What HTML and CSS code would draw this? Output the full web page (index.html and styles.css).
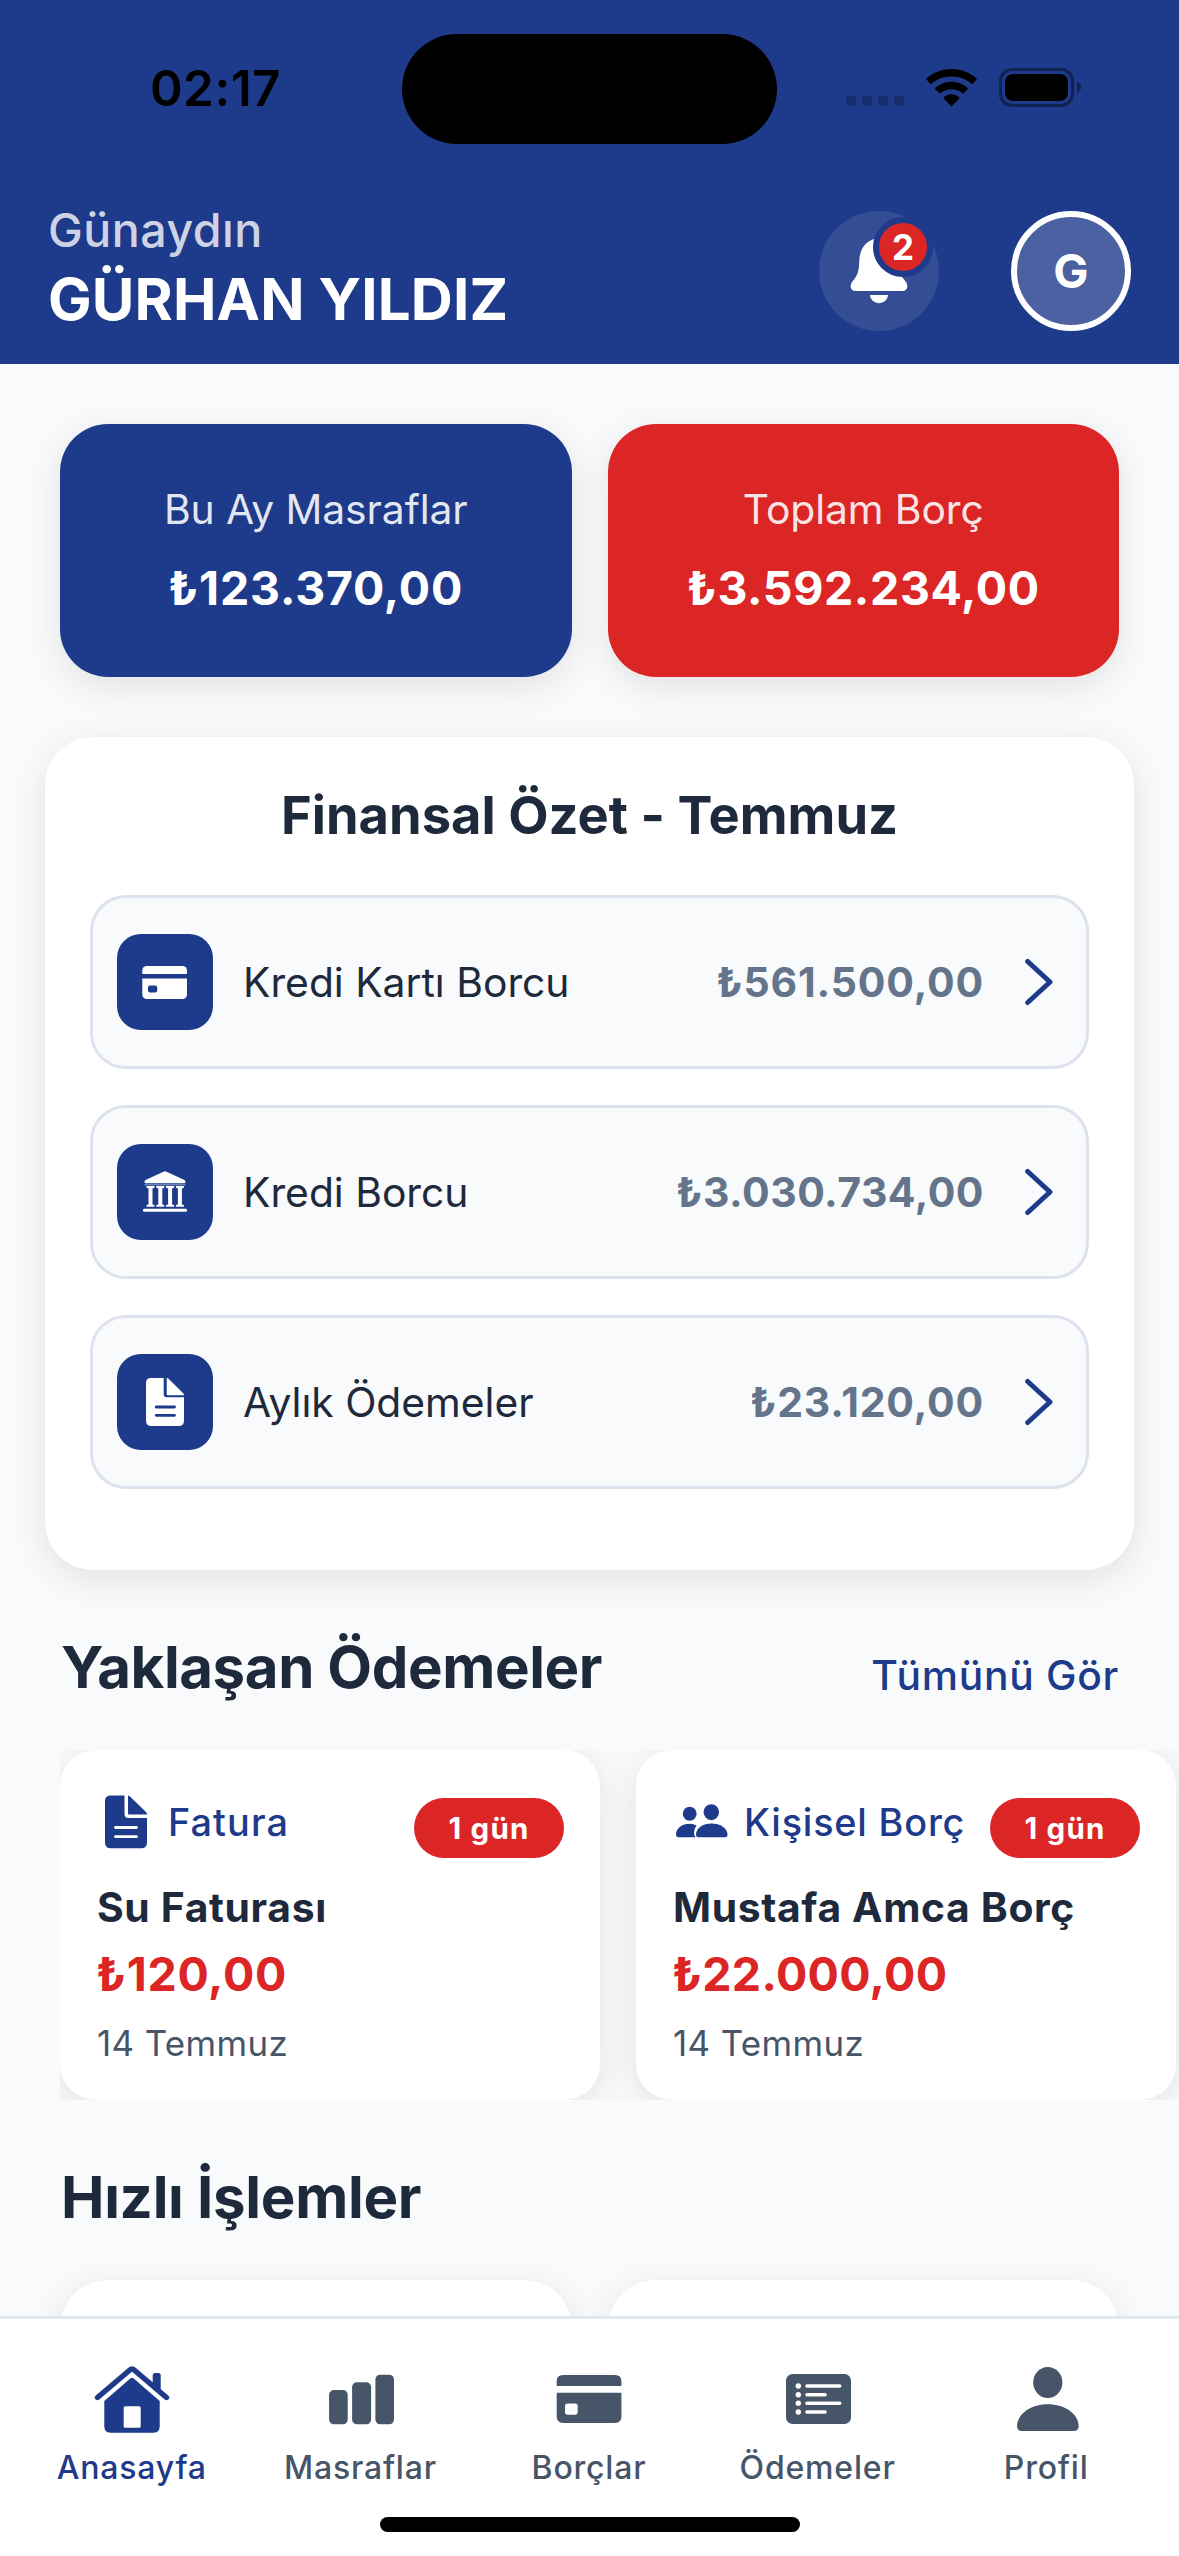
FILE: index.html
```html
<!DOCTYPE html>
<html lang="tr">
<head>
<meta charset="utf-8">
<title>Anasayfa</title>
<link rel="stylesheet" href="styles.css">
</head>
<body>
<header class="header">
  <div class="status">
    <span class="time">02:17</span>
    <span class="island"></span>
    <div class="status-icons">
      <svg class="signal" width="58" height="39" viewBox="0 0 58 39"><rect x="0" y="28" width="10" height="10" rx="3"/><rect x="16" y="28" width="10" height="10" rx="3"/><rect x="32" y="28" width="10" height="10" rx="3"/><rect x="48" y="28" width="10" height="10" rx="3"/></svg>
      <svg width="51" height="39" viewBox="0 0 51 39"><path d="M25.500 1C35.500 1 44.500 4.700 51 11L46.200 16.200C40.800 11.200 33.500 8.500 25.500 8.500S10.200 11.200 4.800 16.200L0 11C6.500 4.700 15.500 1 25.500 1Z"/><path d="M25.500 13.800C32 13.800 37.700 16.300 42.200 20.500L37.200 25.700C34 22.800 30 21.200 25.500 21.200S17 22.800 13.800 25.700L8.800 20.500C13.300 16.300 19 13.800 25.500 13.800Z"/><path d="M25.500 26.300C28.600 26.300 31.200 27.500 33.300 29.700C33.500 30 33.500 30.200 33.300 30.500L26 38Q25.500 38.500 25 38L17.700 30.500C17.500 30.200 17.500 30 17.700 29.700C19.800 27.500 22.400 26.300 25.500 26.300Z"/></svg>
      <svg width="82" height="39" viewBox="0 0 82 39"><g opacity=".4"><rect x="1.500" y="1.500" width="72" height="36" rx="11.500" fill="none" stroke="#000" stroke-width="3"/><path d="M78 13.700C80.500 14.500 82 16.700 82 19.200S80.500 24 78 24.800Z"/></g><rect x="6" y="6" width="63" height="27" rx="8"/></svg>
    </div>
  </div>
  <div class="greeting-row">
    <div class="greeting">
      <div class="hello">Günaydın</div>
      <div class="user">GÜRHAN YILDIZ</div>
    </div>
    <div class="bell">
      <svg width="120" height="120" viewBox="0 0 120 120" fill="#fff"><path d="M60 27C49 28 41 36 40.300 49C40 60 39 64 33.800 70C30 74.500 31.500 80 37 80H83C88.500 80 90 74.500 86.200 70C81 64 80 60 79.700 49C79 36 71 28 60 27Z"/><path d="M51 84H69A9 8.200 0 0 1 51 84Z"/></svg>
      <span class="count">2</span>
    </div>
    <div class="avatar">G</div>
  </div>
</header>

<main class="content">
  <section class="stats">
    <div class="stat"><span class="stat-label">Bu Ay Masraflar</span><span class="stat-value">₺123.370,00</span></div>
    <div class="stat stat-red"><span class="stat-label">Toplam Borç</span><span class="stat-value tight">₺3.592.234,00</span></div>
  </section>

  <section class="summary">
    <h2 class="summary-title">Finansal Özet - Temmuz</h2>
    <div class="rows">
      <div class="row">
        <span class="row-icon"><svg width="96" height="96" viewBox="0 0 96 96"><rect x="25.300" y="32" width="44.700" height="33" rx="4.500"/><g class="cut"><path d="M25 40H71V44.500H25Z"/><rect x="31" y="51.500" width="9.200" height="7" rx="2"/></g></svg></span>
        <span class="row-label">Kredi Kartı Borcu</span><span class="row-value">₺561.500,00</span>
        <svg class="chevron" width="28" height="48" viewBox="0 0 28 48"><path d="M2.700 3.500L25 24L2.700 44.500"/></svg>
      </div>
      <div class="row">
        <span class="row-icon"><svg width="96" height="96" viewBox="0 0 96 96"><path d="M46.500 27.700Q48 27 49.500 27.700L67.500 36Q68.500 36.600 68.500 38.200Q68.500 39.200 67.500 39.200H28.500Q27.500 39.200 27.500 38.200Q27.500 36.600 28.500 36Z"/><path d="M27.500 40.400H68.500V41.300H27.500Z" opacity=".75"/><path d="M29.500 42h8v1.800l-2 .6v16l2 .6v1.800h-8v-1.800l2-.6v-16l-2-.6ZM39.300 42h8v1.800l-2 .6v16l2 .6v1.800h-8v-1.800l2-.6v-16l-2-.6ZM49.100 42h8v1.800l-2 .6v16l2 .6v1.800h-8v-1.800l2-.6v-16l-2-.6ZM58.900 42h8v1.800l-2 .6v16l2 .6v1.800h-8v-1.800l2-.6v-16l-2-.6Z"/><rect x="26" y="64.700" width="44" height="3" rx="1.300"/></svg></span>
        <span class="row-label">Kredi Borcu</span><span class="row-value tight">₺3.030.734,00</span>
        <svg class="chevron" width="28" height="48" viewBox="0 0 28 48"><path d="M2.700 3.500L25 24L2.700 44.500"/></svg>
      </div>
      <div class="row">
        <span class="row-icon"><svg width="96" height="96" viewBox="0 0 96 96"><path d="M34 24H46.700V40.500Q46.700 43.300 49.500 43.300H67V66.500Q67 72 61.500 72H34.500Q29 72 29 66.500V29Q29 24 34 24Z"/><path d="M49.700 24Q50.700 24 51.500 24.800L66 39Q67 40 67 41.200H50.700Q49.700 41.200 49.700 40.200Z"/><path class="lines" d="M39.200 53H57.500M39.200 61.300H57.500"/></svg></span>
        <span class="row-label">Aylık Ödemeler</span><span class="row-value">₺23.120,00</span>
        <svg class="chevron" width="28" height="48" viewBox="0 0 28 48"><path d="M2.700 3.500L25 24L2.700 44.500"/></svg>
      </div>
    </div>
  </section>

  <div class="section-head">
    <h2 class="section-title">Yaklaşan Ödemeler</h2>
    <a class="see-all">Tümünü Gör</a>
  </div>
  <section class="payments">
    <article class="payment">
      <div class="payment-head">
        <div class="kind">
          <svg width="60" height="60" viewBox="0 0 60 60"><path d="M14.500 3.500H28.500V22Q28.500 26 32.500 26H51V50.500Q51 56.300 45.200 56.300H14.800Q9 56.300 9 50.500V9Q9 3.500 14.500 3.500Z"/><path d="M32 3.500Q33 3.500 34 4.500L50 20Q51 21 51 22.500H33Q32 22.500 32 21.500Z"/><path d="M19.500 35.500H40.500M19.500 44.700H40.500" stroke="#fff" stroke-width="2.800" stroke-linecap="round"/></svg>
          <span class="kind-label wide">Fatura</span>
        </div>
        <span class="due">1 gün</span>
      </div>
      <div class="payment-name">Su Faturası</div>
      <div class="payment-amount">₺120,00</div>
      <div class="payment-date">14 Temmuz</div>
    </article>
    <article class="payment">
      <div class="payment-head">
        <div class="kind">
          <svg width="60" height="60" viewBox="0 0 60 60"><ellipse cx="17.700" cy="21.800" rx="6.900" ry="7"/><ellipse cx="39.300" cy="20.200" rx="7.700" ry="8"/><path d="M24.500 33.500Q22.200 36.700 22 40.500Q22 44 23.500 45.200H6.500Q4 45.200 4 42.500C4 36.500 10 31.800 17.700 31.800Q21.500 31.800 24.500 33.500Z"/><path d="M26.500 45.200Q24 45.200 24 42.500C24 36.500 31 31.600 39.500 31.600S55.500 36.500 55.500 42.500Q55.500 45.200 53 45.200Z"/></svg>
          <span class="kind-label">Kişisel Borç</span>
        </div>
        <span class="due">1 gün</span>
      </div>
      <div class="payment-name">Mustafa Amca Borç</div>
      <div class="payment-amount tight">₺22.000,00</div>
      <div class="payment-date">14 Temmuz</div>
    </article>
  </section>

  <h2 class="section-title quick-title">Hızlı İşlemler</h2>
  <section class="quick">
    <div class="quick-card"></div>
    <div class="quick-card"></div>
  </section>
</main>

<nav class="tabbar">
  <div class="tabs">
    <a class="tab active">
      <svg width="84" height="84" viewBox="0 0 84 84"><path d="M62.700 31V17.500Q62.700 15 65.200 15H68.200Q70.700 15 70.700 17.500V36Z"/><path d="M7.500 39.500L39.800 12Q42 10 44.200 12L76.500 39.500" fill="none" stroke="currentColor" stroke-width="5.400" stroke-linecap="round"/><path d="M40.300 20.600Q42 19 43.700 20.600L69.700 43V68.500Q69.700 74.700 63.500 74.700H20.500Q14.300 74.700 14.300 68.500V43Z"/><rect x="33.700" y="48.300" width="17" height="21.400" rx="1.500" fill="#fff"/></svg>
      <span class="tab-label">Anasayfa</span>
    </a>
    <a class="tab">
      <svg width="84" height="84" viewBox="0 0 84 84"><rect x="10.100" y="32" width="18.600" height="34.300" rx="4.800"/><rect x="33.100" y="24.300" width="19" height="42" rx="4.800"/><rect x="56.400" y="16.700" width="18.600" height="49.600" rx="4.800"/></svg>
      <span class="tab-label">Masraflar</span>
    </a>
    <a class="tab">
      <svg width="84" height="84" viewBox="0 0 84 84"><path d="M16.200 17H68Q74.400 17 74.400 23.400V28H9.700V23.400Q9.700 17 16.200 17Z"/><path d="M9.700 34.700H74.400V58.600Q74.400 65 68 65H16.200Q9.700 65 9.700 58.600Z"/><rect x="18" y="45.500" width="12.700" height="11.300" rx="2.800" fill="#fff"/></svg>
      <span class="tab-label">Borçlar</span>
    </a>
    <a class="tab">
      <svg width="84" height="84" viewBox="0 0 84 84"><rect x="10" y="16" width="65" height="50" rx="6.500"/><g fill="#fff"><circle cx="22.300" cy="28" r="2.700"/><circle cx="22.300" cy="36.700" r="2.700"/><circle cx="22.300" cy="45.300" r="2.700"/><circle cx="22.300" cy="54" r="2.700"/></g><path d="M31 28H63.700M31 36.700H49M31 45.300H63.700M31 54H49" stroke="#fff" stroke-width="3.600" stroke-linecap="round"/></svg>
      <span class="tab-label">Ödemeler</span>
    </a>
    <a class="tab">
      <svg width="84" height="84" viewBox="0 0 84 84"><ellipse cx="42.800" cy="24.500" rx="14.600" ry="15.500"/><path d="M17 73Q12 73 12 68C12.500 56 25.500 46.300 42.800 46.300S73.200 56 73.700 68Q73.700 73 68.700 73Z"/></svg>
      <span class="tab-label">Profil</span>
    </a>
  </div>
  <div class="home-indicator"></div>
</nav>
</body>
</html>
```

FILE: styles.css
```css
* { box-sizing: border-box; }

body {
  margin: 0;
  width: 1179px;
  height: 2556px;
  display: flex;
  flex-direction: column;
  overflow: hidden;
  background: #f8fafc;
  color: #1e293b;
  font-family: Inter, "Liberation Sans", sans-serif;
}

h2 { margin: 0; }
svg { display: block; flex: none; }

.header {
  flex: none;
  height: 364px;
  background: #1e3a8a;
}

.status {
  height: 177px;
  display: grid;
  grid-template-columns: 402px 375px 402px;
  align-items: start;
}

.time {
  padding: 58px 0 0 150px;
  color: #000;
  font-size: 49.5px;
  font-weight: 600;
  line-height: 60px;
  letter-spacing: .45px;
}

.island {
  height: 110px;
  margin-top: 34px;
  border-radius: 55px;
  background: #000;
}

.status-icons {
  display: flex;
  gap: 22px;
  padding: 68px 0 0 69px;
}

.signal { opacity: .2; }

.greeting-row {
  display: flex;
  align-items: flex-start;
  padding: 0 48px;
}

.greeting {
  flex: 1;
  padding-top: 25px;
  color: #fff;
}

.hello {
  margin-bottom: 4px;
  color: rgba(255, 255, 255, .8);
  font-size: 46.5px;
  font-weight: 500;
  line-height: 57px;
  letter-spacing: .5px;
}

.user {
  font-size: 58.2px;
  font-weight: 700;
  line-height: 72px;
  letter-spacing: .15px;
}

.bell {
  position: relative;
  width: 120px;
  height: 120px;
  margin: 34px 72px 0 0;
  border-radius: 50%;
  background: rgba(255, 255, 255, .1);
}

.count {
  position: absolute;
  top: 6px;
  left: 54px;
  width: 60px;
  height: 60px;
  border: 6px solid #1e3a8a;
  border-radius: 50%;
  background: #dc2626;
  color: #fff;
  font-size: 35px;
  font-weight: 700;
  line-height: 48px;
  text-align: center;
}

.avatar {
  width: 120px;
  height: 120px;
  margin-top: 34px;
  border: 6px solid #fff;
  border-radius: 50%;
  background: rgba(255, 255, 255, .2);
  color: #fff;
  font-size: 47px;
  font-weight: 700;
  line-height: 108px;
  text-align: center;
}

.content {
  flex: 1;
  min-height: 0;
  overflow: hidden;
  padding-top: 60px;
}

.stats,
.quick {
  display: grid;
  grid-template-columns: 1fr 1fr;
  gap: 36px;
  padding: 0 60px;
}

.stat {
  height: 253px;
  padding-top: 60px;
  display: flex;
  flex-direction: column;
  align-items: center;
  gap: 26px;
  border-radius: 48px;
  background: #1e3a8a;
  box-shadow: 0 9px 36px rgba(0, 0, 0, .1);
  color: #fff;
}

.stat-red { background: #dc2626; }

.stat-label {
  color: rgba(255, 255, 255, .9);
  font-size: 40.8px;
  line-height: 50px;
  letter-spacing: -.08px;
}

.stat-value {
  font-size: 46.5px;
  font-weight: 700;
  line-height: 57px;
  letter-spacing: .8px;
}

.stat-value.tight { letter-spacing: .6px; }

.summary {
  margin: 60px 45px 0;
  padding: 45px 45px 81px;
  border-radius: 48px;
  background: #fff;
  box-shadow: 0 9px 36px rgba(0, 0, 0, .1);
}

.summary-title {
  margin-bottom: 47px;
  font-size: 52.4px;
  font-weight: 700;
  line-height: 66px;
  letter-spacing: .04px;
  text-align: center;
}

.rows {
  display: flex;
  flex-direction: column;
  gap: 36px;
}

.row {
  height: 174px;
  display: flex;
  align-items: center;
  padding: 0 33px 0 24px;
  border: 3px solid #dde2ee;
  border-radius: 36px;
  background: #f8fafc;
}

.row-icon {
  width: 96px;
  height: 96px;
  border-radius: 24px;
  background: #1e3a8a;
  fill: #fff;
}

.cut { fill: #1e3a8a; }

.lines {
  stroke: #1e3a8a;
  stroke-width: 2.8px;
  stroke-linecap: round;
}

.row-label {
  flex: 1;
  margin-left: 30px;
  font-size: 40.8px;
  line-height: 50px;
}

.row-value {
  margin-right: 41px;
  color: #64748b;
  font-size: 41px;
  font-weight: 700;
  line-height: 50px;
  letter-spacing: .85px;
}

.row-value.tight { letter-spacing: .5px; }

.chevron {
  fill: none;
  stroke: #1e3a8a;
  stroke-width: 5px;
  stroke-linecap: round;
  stroke-linejoin: round;
}

.section-head {
  display: flex;
  justify-content: space-between;
  align-items: flex-start;
  padding: 61px 60px 47px 61px;
}

.section-title {
  font-size: 58.2px;
  font-weight: 700;
  line-height: 72px;
  letter-spacing: -.42px;
}

.see-all {
  padding-top: 19px;
  color: #1e3a8a;
  font-size: 40.8px;
  font-weight: 500;
  line-height: 50px;
  letter-spacing: .69px;
}

.payments {
  height: 350px;
  margin-left: 60px;
  display: flex;
  gap: 36px;
  overflow: hidden;
}

.payment {
  flex: none;
  width: 540px;
  height: 350px;
  padding: 36px;
  border-radius: 36px;
  background: #fff;
  box-shadow: 0 6px 36px rgba(0, 0, 0, .1);
}

.payment-head {
  height: 72px;
  margin-bottom: 24px;
  display: flex;
  justify-content: space-between;
}

.kind {
  display: flex;
  align-items: center;
  gap: 12px;
  color: #1e3a8a;
  fill: currentColor;
}

.kind-label {
  font-size: 37.8px;
  font-weight: 500;
  line-height: 46px;
  letter-spacing: .82px;
  white-space: nowrap;
}

.kind-label.wide { letter-spacing: 1.1px; }

.due {
  align-self: flex-end;
  flex: none;
  width: 150px;
  height: 60px;
  border-radius: 30px;
  background: #dc2626;
  color: #fff;
  font-size: 29.5px;
  font-weight: 700;
  line-height: 61px;
  letter-spacing: 1.2px;
  text-align: center;
}

.payment-name {
  margin: 0 0 14px 1px;
  font-size: 40.8px;
  font-weight: 700;
  line-height: 50px;
  letter-spacing: .65px;
  white-space: nowrap;
}

.payment-amount {
  margin-bottom: 19px;
  color: #dc2626;
  font-size: 46.5px;
  font-weight: 700;
  line-height: 57px;
  letter-spacing: .7px;
}

.payment-amount.tight { letter-spacing: .3px; }

.payment-date {
  margin-left: 1px;
  color: #475569;
  font-size: 34.9px;
  line-height: 43px;
  letter-spacing: .38px;
}

.quick-title {
  margin: 61px 60px 47px 61px;
  letter-spacing: -.31px;
}

.quick-card {
  height: 300px;
  border-radius: 48px;
  background: #fff;
  box-shadow: 0 9px 36px rgba(0, 0, 0, .1);
}

.tabbar {
  flex: none;
  height: 240px;
  display: flex;
  flex-direction: column;
  align-items: center;
  justify-content: space-between;
  padding: 39px 18px 24px;
  border-top: 3px solid #e2e8f0;
  background: #fff;
}

.tabs {
  width: 100%;
  display: grid;
  grid-template-columns: repeat(5, 1fr);
}

.tab {
  display: flex;
  flex-direction: column;
  align-items: center;
  gap: 6px;
  color: #475569;
  fill: currentColor;
}

.tab.active { color: #1e3a8a; }

.tab-label {
  margin-right: 1px;
  font-size: 32px;
  font-weight: 500;
  line-height: 40px;
  letter-spacing: .8px;
}

.home-indicator {
  width: 420px;
  height: 15px;
  border-radius: 8px;
  background: #000;
}
```
